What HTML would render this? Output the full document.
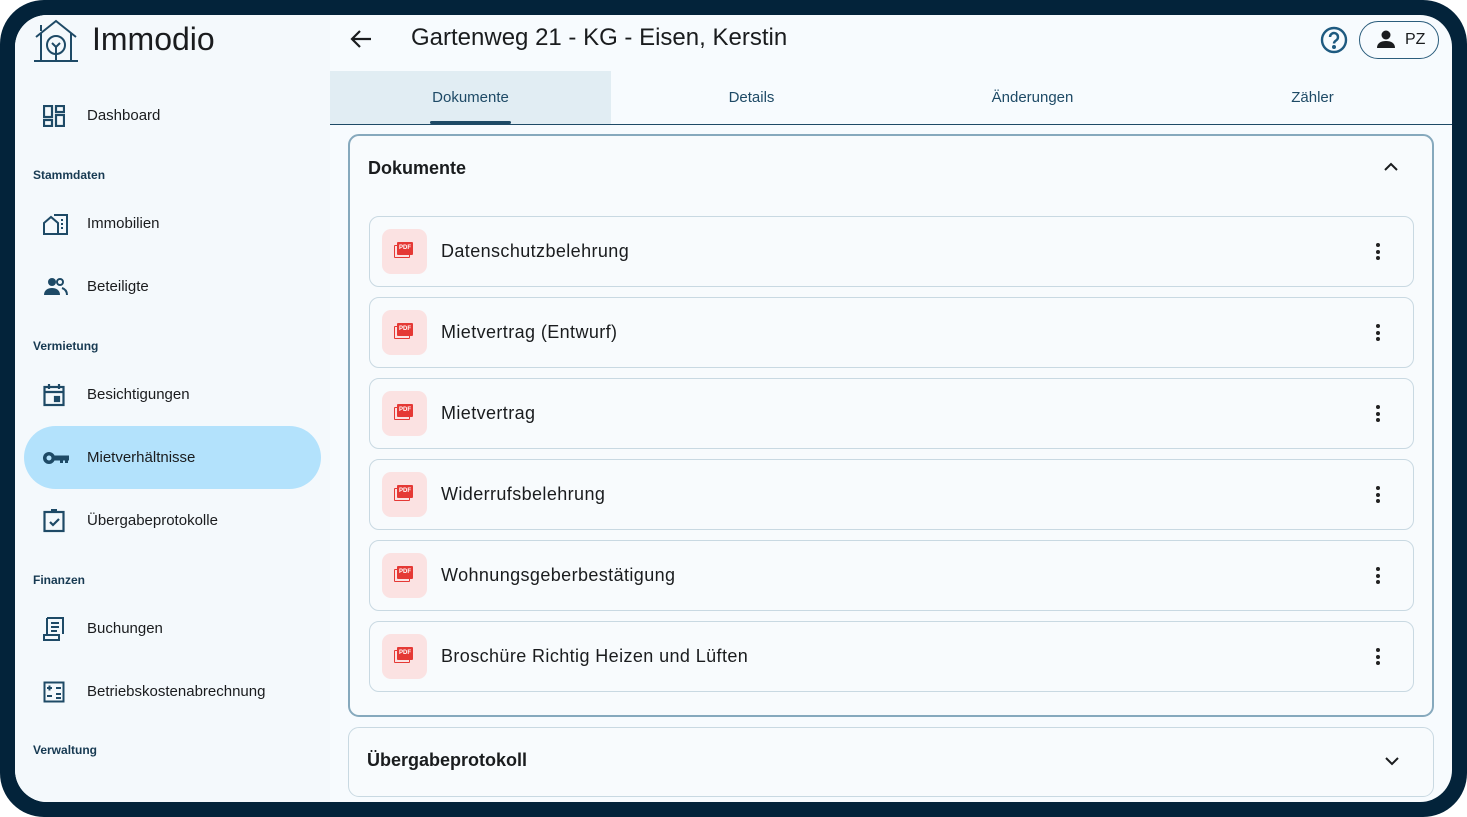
<!DOCTYPE html>
<html><head><meta charset="utf-8"><style>
*{box-sizing:border-box;margin:0;padding:0}
body{width:1467px;height:817px;overflow:hidden;background:#fff;font-family:"Liberation Sans",sans-serif;color:#1a1c1e}
.frame{position:absolute;left:0;top:0;width:1467px;height:817px;background:#03233a;border-radius:44px}
.screen{position:absolute;left:15px;top:15px;width:1437px;height:787px;background:#f7fbfe;border-radius:32px;overflow:hidden}
.side{position:absolute;left:0;top:0;width:315px;height:787px;background:#f4f9fc}
.abs{position:absolute}
.nav{position:absolute;left:9px;width:297px;height:63px;border-radius:32px;display:flex;align-items:center}
.nav span{position:absolute;left:63px;font-size:15px;color:#1a1c1e}
.nav svg{position:absolute;left:19px}
.sec{position:absolute;left:18px;font-size:12px;font-weight:bold;color:#173a52}
.tab{position:absolute;top:56px;height:53px;width:281px;text-align:center;line-height:53px;font-size:15px;color:#1e4a66}
.item{position:absolute;left:354px;width:1045px;height:71px;border:1.5px solid #c9d9e2;border-radius:10px;background:#f8fbfd}
.item .ic{position:absolute;left:12px;top:12px;width:45px;height:45px;border-radius:9px;background:#fbe2e2}
.item .t{position:absolute;left:71px;top:24px;font-size:18px;letter-spacing:.4px;color:#1a1c1e}
.dots{position:absolute;right:33px;top:26px;width:4px}
.dots i{display:block;width:4px;height:4px;border-radius:2px;background:#222;margin-bottom:2.5px}
</style></head><body>
<div class="frame"></div>
<div class="screen">
<div class="side">
 <svg class="abs" style="left:17px;top:2px" width="48" height="46" viewBox="0 0 48 46" fill="none" stroke="#1e4a66" stroke-width="2"><path d="M4 20 L24 4 L44 20"/><path d="M9 16 V44 H39 V16"/><path d="M9 8 V14"/><path d="M2 44 H46"/><circle cx="24" cy="28" r="9"/><path d="M24 44 V30 M20 26 l4 4 4-4"/></svg>
 <div class="abs" style="left:77px;top:6px;font-size:32px;color:#1a1c1e">Immodio</div>
 <div class="nav" style="top:69px"><svg width="22" height="22" viewBox="0 0 22 22" fill="none" stroke="#1e4a66" stroke-width="2.2"><rect x="1" y="1" width="8" height="11"/><rect x="13" y="1" width="8" height="6"/><rect x="1" y="15" width="8" height="6"/><rect x="13" y="10" width="8" height="11"/></svg><span>Dashboard</span></div>
 <div class="sec" style="top:153px">Stammdaten</div>
 <div class="nav" style="top:177px"><svg width="26" height="22" viewBox="0 0 26 22" fill="none" stroke="#1e4a66" stroke-width="2"><path d="M1 10 L8 4 L15 10 V21 H1Z"/><path d="M11 2 H24 V21 H15"/><path d="M18 7h2M18 11h2M18 15h2"/></svg><span>Immobilien</span></div>
 <div class="nav" style="top:240px"><svg width="26" height="20" viewBox="0 0 26 20" fill="#1e4a66"><circle cx="9" cy="5" r="4"/><path d="M1 18 c0-5 4-7 8-7s8 2 8 7z"/><circle cx="17" cy="5" r="3" fill="none" stroke="#1e4a66" stroke-width="2"/><path d="M19 11 c3 1 5 3 5 7" fill="none" stroke="#1e4a66" stroke-width="2"/></svg><span>Beteiligte</span></div>
 <div class="sec" style="top:324px">Vermietung</div>
 <div class="nav" style="top:348px"><svg width="22" height="24" viewBox="0 0 22 24" fill="none" stroke="#1e4a66" stroke-width="2.2"><rect x="1.5" y="4" width="19" height="18"/><path d="M1.5 9 H20.5M6 1v5M16 1v5"/><rect x="12" y="14" width="4" height="4" fill="#1e4a66"/></svg><span>Besichtigungen</span></div>
 <div class="nav" style="top:411px;background:#b3e2fc"><svg width="26" height="14" viewBox="0 0 26 14" fill="#1e4a66"><circle cx="6" cy="7" r="6"/><circle cx="6" cy="7" r="2.5" fill="#b3e2fc"/><rect x="10" y="4.5" width="16" height="5"/><rect x="17" y="8" width="3" height="4"/><rect x="22" y="8" width="3" height="4"/></svg><span>Mietverhältnisse</span></div>
 <div class="nav" style="top:474px"><svg width="22" height="24" viewBox="0 0 22 24" fill="none" stroke="#1e4a66" stroke-width="2.2"><rect x="1.5" y="3" width="19" height="19"/><path d="M7 13 l3 3 6-6"/><path d="M8 1 H14"/></svg><span>Übergabeprotokolle</span></div>
 <div class="sec" style="top:558px">Finanzen</div>
 <div class="nav" style="top:582px"><svg width="22" height="24" viewBox="0 0 22 24" fill="none" stroke="#1e4a66" stroke-width="2"><path d="M4 1 H20 V17"/><path d="M4 1 V18 H1 V23 H16 V18 H4"/><path d="M8 6h8M8 10h8M8 14h6"/></svg><span>Buchungen</span></div>
 <div class="nav" style="top:645px"><svg width="22" height="22" viewBox="0 0 22 22" fill="none" stroke="#1e4a66" stroke-width="2"><rect x="1.5" y="1.5" width="19" height="19"/><path d="M4 7h5M6.5 4.5v5M13 7h5M4 15h5M13 13h5M13 17h5"/></svg><span>Betriebskostenabrechnung</span></div>
 <div class="sec" style="top:728px">Verwaltung</div>
</div>
<svg class="abs" style="left:335px;top:14px" width="22" height="20" viewBox="0 0 22 20" fill="none" stroke="#1a1c1e" stroke-width="2.2"><path d="M21 10 H2 M10 2 L2 10 L10 18"/></svg>
<div class="abs" style="left:396px;top:9px;font-size:24px;color:#1a1c1e">Gartenweg 21 - KG - Eisen, Kerstin</div>
<svg class="abs" style="left:1305px;top:11px" width="28" height="28" viewBox="0 0 28 28" fill="none" stroke="#1e5a80" stroke-width="2.4"><circle cx="14" cy="14" r="12"/><path d="M10 11 a4 4 0 1 1 6 3.5 c-1.5 1-2 1.5-2 3" /><circle cx="14" cy="21" r="0.8" fill="#1e5a80"/></svg>
<div class="abs" style="left:1344px;top:6px;width:80px;height:38px;border:1.5px solid #2b5d7c;border-radius:19px"></div>
<svg class="abs" style="left:1361px;top:14px" width="20" height="20" viewBox="0 0 20 20" fill="#1a1c1e"><circle cx="10" cy="6" r="4.5"/><path d="M1 19 c0-5 4-7 9-7s9 2 9 7z"/></svg>
<div class="abs" style="left:1390px;top:16px;font-size:16px">PZ</div>
<div class="abs" style="left:315px;top:56px;width:281px;height:53px;background:#e1edf3"></div>
<div class="tab" style="left:315px">Dokumente</div>
<div class="tab" style="left:596px">Details</div>
<div class="tab" style="left:877px">Änderungen</div>
<div class="tab" style="left:1157px">Zähler</div>
<div class="abs" style="left:415px;top:106px;width:81px;height:3px;background:#1e4a66;border-radius:2px"></div>
<div class="abs" style="left:315px;top:108.5px;width:1122px;height:1.5px;background:#1e4a66"></div>
<div class="abs" style="left:333px;top:119px;width:1086px;height:583px;border:2px solid #86a9bd;border-radius:11px;background:#f8fbfd"></div>
<div class="abs" style="left:353px;top:143px;font-size:18px;font-weight:bold">Dokumente</div>
<svg class="abs" style="left:1369px;top:147px" width="14" height="9" viewBox="0 0 14 9" fill="none" stroke="#1a1c1e" stroke-width="2"><path d="M1 8 L7 2 L13 8"/></svg>
<div class="item" style="top:201px"><div class="ic"></div><div class="t">Datenschutzbelehrung</div><div class="dots"><i></i><i></i><i></i></div></div>
<div class="item" style="top:282px"><div class="ic"></div><div class="t">Mietvertrag (Entwurf)</div><div class="dots"><i></i><i></i><i></i></div></div>
<div class="item" style="top:363px"><div class="ic"></div><div class="t">Mietvertrag</div><div class="dots"><i></i><i></i><i></i></div></div>
<div class="item" style="top:444px"><div class="ic"></div><div class="t">Widerrufsbelehrung</div><div class="dots"><i></i><i></i><i></i></div></div>
<div class="item" style="top:525px"><div class="ic"></div><div class="t">Wohnungsgeberbestätigung</div><div class="dots"><i></i><i></i><i></i></div></div>
<div class="item" style="top:606px"><div class="ic"></div><div class="t">Broschüre Richtig Heizen und Lüften</div><div class="dots"><i></i><i></i><i></i></div></div>
<div class="abs" style="left:333px;top:712px;width:1086px;height:70px;border:1.5px solid #c9d9e2;border-radius:11px;background:#f8fbfd"></div>
<div class="abs" style="left:352px;top:735px;font-size:18px;font-weight:bold">Übergabeprotokoll</div>
<svg class="abs" style="left:1370px;top:742px" width="14" height="9" viewBox="0 0 14 9" fill="none" stroke="#1a1c1e" stroke-width="2"><path d="M1 1 L7 7 L13 1"/></svg>
</div>
<script></script>
<style>.ic::after{content:"PDF";position:absolute;left:15px;top:13px;width:16px;height:13px;background:#e53935;color:#fff;font-size:6px;font-weight:bold;line-height:13px;text-align:center;box-shadow:-3px 3px 0 -1px #fbe2e2,-3px 3px 0 0 #e53935;border-radius:1px}</style>
</body></html>
